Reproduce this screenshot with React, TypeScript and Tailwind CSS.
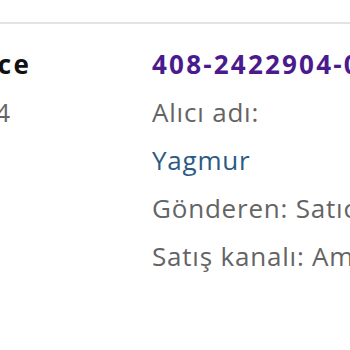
const App = () => {
  return (
    <div className="w-[350px] h-[350px] overflow-hidden bg-white font-['Open_Sans',sans-serif] text-[26px] leading-[48px] tracking-[0.8px]">
      <div className="h-[24px] border-b-2 border-[#e3e3e3]"></div>
      <div className="flex pt-[16px]">
        {/* left column, cut off by the window */}
        <div className="w-[152px] shrink-0 flex flex-col items-end pr-[121px] whitespace-nowrap">
          <p className="font-bold tracking-[2.2px] text-[#111111]">Amazon Marketplace</p>
          <p className="text-[#666666] mr-[20px]">15 Ağu 2024</p>
        </div>
        {/* right column */}
        <div className="flex flex-col whitespace-nowrap">
          <p className="font-bold tracking-[2.2px] text-[#4b1a8c]">408-2422904-0153124</p>
          <p className="text-[#646464]">Alıcı adı:</p>
          <p className="text-[#2b5b84]">Yagmur</p>
          <p className="text-[#646464]">Gönderen: Satıcı</p>
          <p className="text-[#646464]">Satış kanalı: Amazon.com.tr</p>
        </div>
      </div>
    </div>
  );
};

export default App;
